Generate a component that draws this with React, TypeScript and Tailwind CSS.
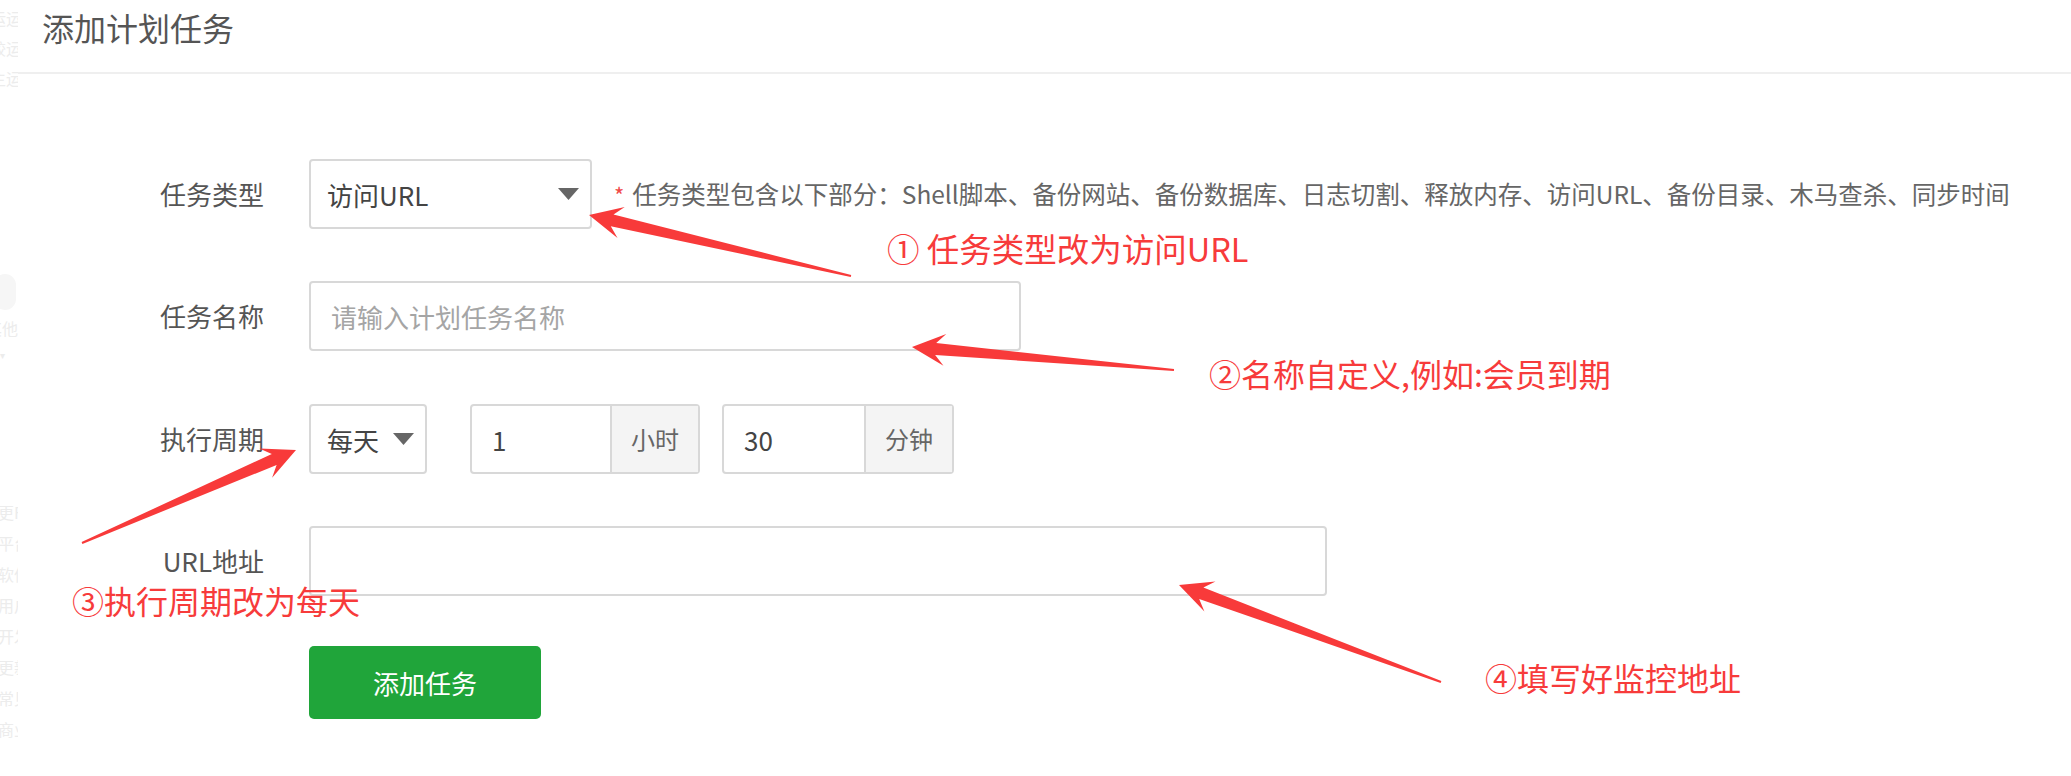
import React from "react";

const font = "font-['Microsoft_YaHei','Noto_Sans_CJK_SC',sans-serif]";

// faint sidebar remnants on the far left edge (cut off)
const sideTop = ["运", "较", "主"];
const sideBottom = ["更F", "平台", "软件", "用户", "开发", "更新", "常见", "商业"];

type Pt = [number, number];

const arrows: { tail: Pt; tip: Pt }[] = [
  { tail: [851, 276], tip: [589, 215] },
  { tail: [1174, 370], tip: [912, 347] },
  { tail: [82, 543], tip: [296, 450] },
  { tail: [1441, 682], tip: [1179, 585] },
];

function arrowPoints(tail: Pt, tip: Pt) {
  const dx = tip[0] - tail[0];
  const dy = tip[1] - tail[1];
  const len = Math.hypot(dx, dy);
  const d: Pt = [dx / len, dy / len];
  const n: Pt = [-d[1], d[0]];
  const headLen = 33;
  const headHalf = 16;
  const shaftHalf = 6;
  const tailHalf = 1;
  const at = (base: Pt, along: number, side: number): string =>
    `${base[0] + d[0] * along + n[0] * side},${base[1] + d[1] * along + n[1] * side}`;
  return [
    at(tail, 0, tailHalf),
    at(tip, -headLen * 0.72, shaftHalf),
    at(tip, -headLen, headHalf),
    at(tip, 0, 0),
    at(tip, -headLen, -headHalf),
    at(tip, -headLen * 0.72, -shaftHalf),
    at(tail, 0, -tailHalf),
  ].join(" ");
}

const Caret = ({ className = "" }: { className?: string }) => (
  <svg width="21" height="12" viewBox="0 0 21 12" className={className}>
    <path d="M0 0h21L10.5 12z" fill="#666" />
  </svg>
);

const Label = ({ children }: { children: React.ReactNode }) => (
  <div className="w-[120px] mr-[45px] text-right text-[26px] text-[#555] leading-none">{children}</div>
);

export default function App() {
  return (
    <div className={`relative w-[2071px] h-[776px] overflow-hidden bg-white ${font}`}>
      <div className="flex h-full">
        <div className="w-[18px] shrink-0 overflow-hidden text-[16px] text-[#ececec] leading-none">
          <div className="flex flex-col gap-[14px] pt-[10px] -ml-[10px] whitespace-nowrap">
            {sideTop.map((t) => (
              <div key={t}>{t}运</div>
            ))}
          </div>
          <div className="mt-[188px] -ml-[6px] w-[22px] h-[36px] rounded-full bg-[#f6f6f6]" />
          <div className="mt-[10px] -ml-[14px] whitespace-nowrap">其他</div>
          <div className="mt-[14px] text-[10px]">▾</div>
          <div className="flex flex-col gap-[15px] mt-[144px] -ml-[2px] whitespace-nowrap">
            {sideBottom.map((t) => (
              <div key={t}>{t}</div>
            ))}
          </div>
        </div>

        <div className="flex-1">
          <div className="h-[74px] border-b-2 border-[#efefef] pl-[24px] pt-[7px]">
            <h1 className="text-[32px] leading-[40px] text-[#555]">添加计划任务</h1>
          </div>

          <div className="pl-[126px] pt-[85px] flex flex-col">
            <div className="flex items-center h-[70px]">
              <Label>任务类型</Label>
              <div className="flex items-center justify-between w-[283px] h-[70px] border-2 border-[#d8d8d8] rounded-[4px] pl-[16px] pr-[11px] text-[26px] text-[#444]">
                <span>访问URL</span>
                <Caret />
              </div>
              <div className="ml-[22px] flex items-center text-[24.5px] text-[#666]">
                <span className="text-[#f04848] mr-[8px] text-[22px]">*</span>
                <span>任务类型包含以下部分：Shell脚本、备份网站、备份数据库、日志切割、释放内存、访问URL、备份目录、木马查杀、同步时间</span>
              </div>
            </div>

            <div className="flex items-center h-[70px] mt-[52px]">
              <Label>任务名称</Label>
              <div className="flex items-center w-[712px] h-[70px] border-2 border-[#d8d8d8] rounded-[4px] pl-[20px] text-[26px] text-[#a5a5a5]">
                请输入计划任务名称
              </div>
            </div>

            <div className="flex items-center h-[70px] mt-[53px]">
              <Label>执行周期</Label>
              <div className="flex items-center justify-between w-[118px] h-[70px] border-2 border-[#d8d8d8] rounded-[4px] pl-[16px] pr-[11px] text-[26px] text-[#444]">
                <span>每天</span>
                <Caret />
              </div>
              <div className="ml-[43px] flex h-[70px] border-2 border-[#d8d8d8] rounded-[4px] text-[26px]">
                <div className="w-[138px] flex items-center pl-[20px] text-[#444]">1</div>
                <div className="w-[88px] flex items-center justify-center border-l-2 border-[#d8d8d8] bg-[#f4f4f4] text-[24px] text-[#666]">
                  小时
                </div>
              </div>
              <div className="ml-[22px] flex h-[70px] border-2 border-[#d8d8d8] rounded-[4px] text-[26px]">
                <div className="w-[140px] flex items-center pl-[20px] text-[#444]">30</div>
                <div className="w-[88px] flex items-center justify-center border-l-2 border-[#d8d8d8] bg-[#f4f4f4] text-[24px] text-[#666]">
                  分钟
                </div>
              </div>
            </div>

            <div className="flex items-center h-[70px] mt-[52px]">
              <Label>URL地址</Label>
              <div className="w-[1018px] h-[70px] border-2 border-[#d8d8d8] rounded-[4px]" />
            </div>

            <div className="flex mt-[50px]">
              <div className="w-[165px]" />
              <button className="w-[232px] h-[73px] rounded-[5px] bg-[#20a53a] text-white text-[26px]">添加任务</button>
            </div>
          </div>
        </div>
      </div>

      {/* red annotation overlay */}
      <svg className="absolute inset-0 pointer-events-none" width="2071" height="776">
        {arrows.map((a, i) => (
          <polygon key={i} points={arrowPoints(a.tail, a.tip)} fill="#f83a3a" />
        ))}
      </svg>
      <div className="absolute left-[887px] top-[228px] text-[32.5px] leading-[40px] text-[#f73b3b] whitespace-nowrap">① 任务类型改为访问URL</div>
      <div className="absolute left-[1209px] top-[353px] text-[32px] leading-[40px] text-[#f73b3b] whitespace-nowrap">②名称自定义,例如:会员到期</div>
      <div className="absolute left-[72px] top-[580px] text-[32px] leading-[40px] text-[#f73b3b] whitespace-nowrap">③执行周期改为每天</div>
      <div className="absolute left-[1485px] top-[657px] text-[32px] leading-[40px] text-[#f73b3b] whitespace-nowrap">④填写好监控地址</div>
    </div>
  );
}
